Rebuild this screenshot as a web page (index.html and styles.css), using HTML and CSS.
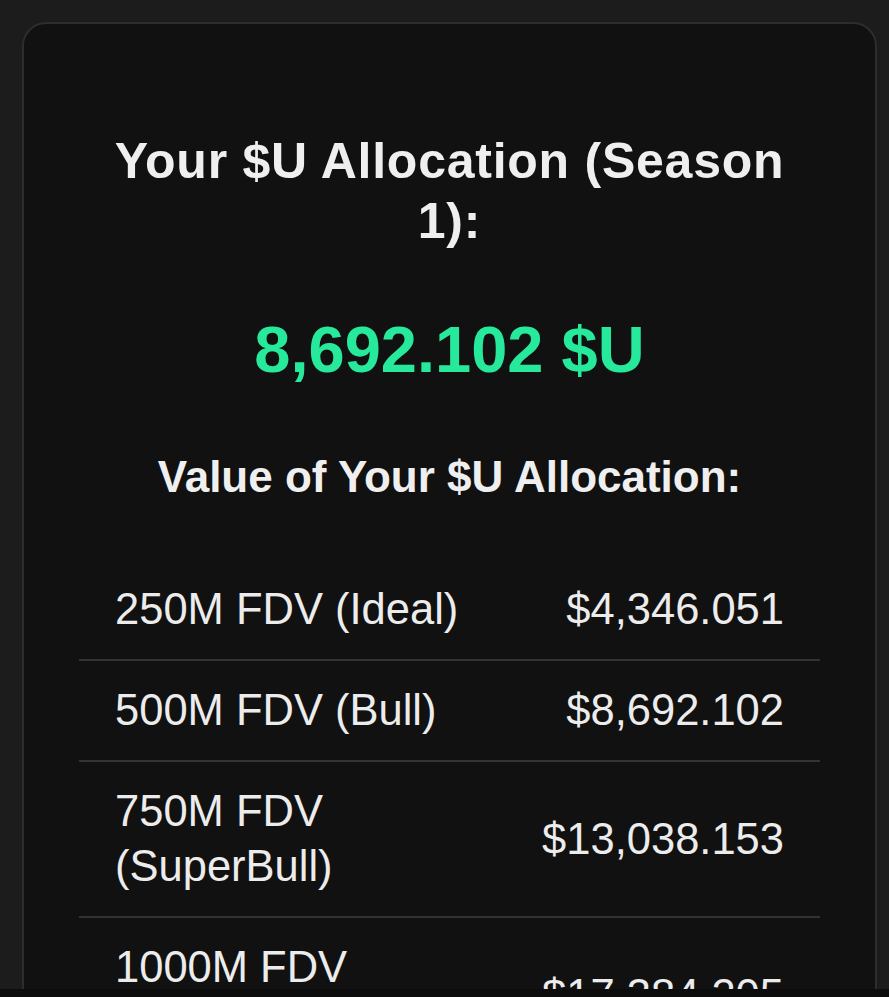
FILE: index.html
```html
<!DOCTYPE html>
<html lang="en">
<head>
<meta charset="utf-8">
<title>Your $U Allocation</title>
<link rel="stylesheet" href="styles.css">
</head>
<body>
  <main class="card">
    <h1 class="title">Your $U Allocation (Season 1):</h1>
    <div class="amount">8,692.102 $U</div>
    <h2 class="subtitle">Value of Your $U Allocation:</h2>
    <div class="table">
      <div class="row"><span class="label">250M FDV (Ideal)</span><span class="value">$4,346.051</span></div>
      <div class="row"><span class="label">500M FDV (Bull)</span><span class="value">$8,692.102</span></div>
      <div class="row"><span class="label">750M FDV (SuperBull)</span><span class="value">$13,038.153</span></div>
      <div class="row"><span class="label">1000M FDV (MegaBull)</span><span class="value">$17,384.205</span></div>
    </div>
  </main>
  <div class="bottom-bar"></div>
</body>
</html>
```

FILE: styles.css
```css
html, body {
  margin: 0;
  height: 997px;
  overflow: hidden;
}
body {
  background: #1c1c1c;
  padding: 22px 12px 0 22px;
  box-sizing: border-box;
  font-family: "Liberation Sans", Arial, Helvetica, sans-serif;
  color: #f0f0f0;
}
.card {
  background: #111111;
  border: 2px solid #2d2d2d;
  border-radius: 24px;
  padding: 107px 55px 40px;
  text-align: center;
}
.title {
  margin: 0;
  padding: 0 28px;
  font-size: 50px;
  line-height: 60px;
  font-weight: 700;
  letter-spacing: 0.75px;
  color: #efefef;
}
.amount {
  margin-top: 64px;
  font-size: 65px;
  line-height: 69px;
  font-weight: 700;
  color: #27e99c;
}
.subtitle {
  margin: 68px 0 0;
  font-size: 44px;
  line-height: 50px;
  font-weight: 700;
  color: #efefef;
}
.table {
  margin-top: 58px;
  text-align: left;
}
.row {
  display: flex;
  justify-content: space-between;
  align-items: center;
  gap: 16px;
  padding: 22px 36px;
  font-size: 43.5px;
  line-height: 55px;
  color: #ececec;
  border-bottom: 2px solid #333333;
}
.value {
  white-space: nowrap;
  text-align: right;
}
.bottom-bar {
  position: fixed;
  left: 0;
  right: 0;
  bottom: 0;
  height: 8px;
  background: #0c0c0c;
}
```
